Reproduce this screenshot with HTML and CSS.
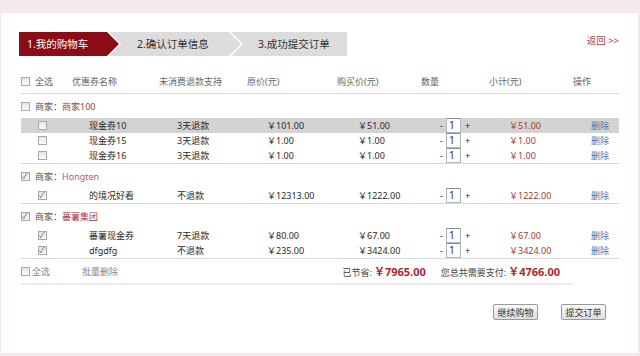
FILE: index.html
```html
<!DOCTYPE html>
<html lang="zh-CN">

<head>
  <meta charset="utf-8" />
  <title>我的购物车</title>
  <link rel="stylesheet" href="styles.css">
</head>

<body>
  <div class="page">
    <!-- Steps -->
    <div class="topbar">
      <div class="steps">
        <div class="step step-first active">1.我的购物车</div>
        <div class="step step-mid">2.确认订单信息</div>
        <div class="step step-last">3.成功提交订单</div>
      </div>
      <a class="back" href="#">返回 &gt;&gt;</a>
    </div>

    <div class="cart">
      <div class="head-row">
        <div class="cell-check"><span class="cb"></span><span>全选</span></div>
        <div>优惠券名称</div>
        <div>未消费退款支持</div>
        <div>原价(元)</div>
        <div>购买价(元)</div>
        <div>数量</div>
        <div>小计(元)</div>
        <div>操作</div>
      </div>

      <div class="group">
        <div class="shop-row"><span class="cb"></span><span class="shop-label">商家：</span><span class="shop-name">商家100</span></div>
        <div class="item-row hover">
          <div><span class="cb"></span></div>
          <div>现金券10</div>
          <div>3天退款</div>
          <div>￥101.00</div>
          <div>￥51.00</div>
          <div class="qty">- <span class="qty-input">1</span> +</div>
          <div class="subtotal">￥51.00</div>
          <div><a class="del" href="#">删除</a></div>
        </div>
        <div class="item-row">
          <div><span class="cb"></span></div>
          <div>现金券15</div>
          <div>3天退款</div>
          <div>￥1.00</div>
          <div>￥1.00</div>
          <div class="qty">- <span class="qty-input">1</span> +</div>
          <div class="subtotal">￥1.00</div>
          <div><a class="del" href="#">删除</a></div>
        </div>
        <div class="item-row">
          <div><span class="cb"></span></div>
          <div>现金券16</div>
          <div>3天退款</div>
          <div>￥1.00</div>
          <div>￥1.00</div>
          <div class="qty">- <span class="qty-input">1</span> +</div>
          <div class="subtotal">￥1.00</div>
          <div><a class="del" href="#">删除</a></div>
        </div>
      </div>

      <div class="group">
        <div class="shop-row"><span class="cb checked"></span><span class="shop-label">商家：</span><span class="shop-name light">Hongten</span></div>
        <div class="item-row">
          <div><span class="cb checked"></span></div>
          <div>的境况好看</div>
          <div>不退款</div>
          <div>￥12313.00</div>
          <div>￥1222.00</div>
          <div class="qty">- <span class="qty-input">1</span> +</div>
          <div class="subtotal">￥1222.00</div>
          <div><a class="del" href="#">删除</a></div>
        </div>
      </div>

      <div class="group">
        <div class="shop-row"><span class="cb checked"></span><span class="shop-label">商家：</span><span class="shop-name">蕃薯集团</span></div>
        <div class="item-row">
          <div><span class="cb checked"></span></div>
          <div>蕃薯现金券</div>
          <div>7天退款</div>
          <div>￥80.00</div>
          <div>￥67.00</div>
          <div class="qty">- <span class="qty-input">1</span> +</div>
          <div class="subtotal">￥67.00</div>
          <div><a class="del" href="#">删除</a></div>
        </div>
        <div class="item-row">
          <div><span class="cb checked"></span></div>
          <div>dfgdfg</div>
          <div>不退款</div>
          <div>￥235.00</div>
          <div>￥3424.00</div>
          <div class="qty">- <span class="qty-input">1</span> +</div>
          <div class="subtotal">￥3424.00</div>
          <div><a class="del" href="#">删除</a></div>
        </div>
      </div>

      <div class="foot-row">
        <div class="foot-left">
          <span class="cb"></span><span class="foot-all">全选</span>
          <a class="batch-del" href="#">批量删除</a>
        </div>
        <div class="summary">
          <span class="sum-label">已节省:</span>
          <span class="sum-value">￥7965.00</span>
          <span class="sum-label pay">您总共需要支付:</span>
          <span class="sum-value">￥4766.00</span>
        </div>
      </div>

      <div class="actions">
        <button class="btn">继续购物</button>
        <button class="btn">提交订单</button>
      </div>
    </div>
  </div>
</body>

</html>
```

FILE: styles.css
```css
/* Global Reset */
* {
  margin: 0;
  padding: 0;
  box-sizing: border-box;
}

body {
  font-family: 'Noto Sans', 'Noto Sans CJK SC', sans-serif;
  background-color: #f4eaec;
  color: #333;
  font-size: 9px;
}

a {
  text-decoration: none;
}

.page {
  margin: 13px 2px 0 1px;
  height: 340px;
  background-color: #fff;
  padding: 19px 19px 0 19px;
}

/* Steps */
.topbar {
  display: flex;
  justify-content: space-between;
  align-items: flex-start;
}

.steps {
  display: flex;
  margin-left: -1px;
}

.step {
  height: 24px;
  line-height: 24px;
  font-size: 10.5px;
  color: #333;
  background-color: #dcdcdc;
}

.step.active {
  background-color: #8b0c16;
  color: #fff;
}

.step-first {
  width: 100px;
  padding-left: 8px;
  clip-path: polygon(0 0, calc(100% - 12px) 0, 100% 50%, calc(100% - 12px) 100%, 0 100%);
}

.step-mid {
  width: 132px;
  margin-left: -10px;
  padding-left: 28px;
  clip-path: polygon(0 0, calc(100% - 12px) 0, 100% 50%, calc(100% - 12px) 100%, 0 100%, 12px 50%);
}

.step-last {
  width: 116px;
  margin-left: -10px;
  padding-left: 27px;
  clip-path: polygon(0 0, 100% 0, 100% 100%, 0 100%, 12px 50%);
}

.back {
  color: #a5424c;
  font-size: 9.5px;
  margin-top: 1px;
}

/* Cart table */
.cart {
  margin-top: 14px;
  margin-left: 1px;
}

.cb {
  display: inline-block;
  width: 9px;
  height: 9px;
  border: 1px solid #a9a9a9;
  background: linear-gradient(#e6e6e6, #fafafa);
  position: relative;
  flex: none;
}

.cb.checked::after {
  content: '✓';
  position: absolute;
  left: 0;
  top: -3px;
  font-size: 8px;
  color: #3e5fa8;
}

.head-row,
.item-row {
  display: grid;
  align-items: center;
}

.head-row {
  grid-template-columns: 51px 87px 88px 90px 84px 68px 84px 47px;
  height: 24px;
  color: #666;
  border-bottom: 1px solid #dcdcdc;
}

.cell-check {
  display: flex;
  align-items: center;
  gap: 5px;
}

.group {
  border-bottom: 1px solid #d9d9d9;
}

.shop-row {
  display: flex;
  align-items: center;
  height: 24px;
  gap: 5px;
  color: #555;
}

.shop-label {
  margin-right: -5px;
}

.shop-name {
  color: #a33c48;
}

.shop-name.light {
  color: #b0607a;
}

.item-row {
  grid-template-columns: 68px 88px 90px 91px 82px 69px 82px 29px;
  height: 15px;
  color: #2a2a2a;
}

.item-row > div:first-child {
  padding-left: 17px;
  display: flex;
  align-items: center;
}

.item-row.hover {
  background-color: #d3d3d3;
}

.qty {
  display: flex;
  align-items: center;
  gap: 3px;
  padding-left: 19px;
  margin-left: -19px;
}

.qty-input {
  display: inline-block;
  width: 15px;
  height: 15px;
  line-height: 13px;
  font-size: 10px;
  padding-left: 2px;
  color: #1e2a6a;
  background-color: #fff;
  border: 1px solid #b5b5b5;
  border-top-color: #8f8f8f;
  margin-right: 1px;
}

.subtotal {
  color: #a8383d;
}

.del {
  color: #4f72ab;
}

/* Footer */
.foot-row {
  width: 552px;
  height: 26px;
  display: flex;
  align-items: center;
  justify-content: space-between;
  padding-right: 13px;
  border-bottom: 2px solid #ececec;
}

.foot-left {
  display: flex;
  align-items: center;
  color: #888;
}

.foot-all {
  margin-left: 2px;
}

.batch-del {
  color: #888;
  margin-left: 32px;
}

.summary {
  display: flex;
  align-items: baseline;
  color: #444;
}

.sum-value {
  color: #b3242f;
  font-size: 11px;
  font-weight: 700;
  margin-left: 2px;
}

.sum-label.pay {
  margin-left: 15px;
}

.actions {
  display: flex;
  justify-content: flex-end;
  gap: 23px;
  margin-top: 19px;
  padding-right: 13px;
}

.btn {
  width: 45px;
  height: 16px;
  font-family: inherit;
  font-size: 9px;
  color: #333;
  border: 1px solid #9a9a9a;
  border-radius: 2px;
  background: linear-gradient(#fafafa, #dedede);
  cursor: pointer;
}
```
